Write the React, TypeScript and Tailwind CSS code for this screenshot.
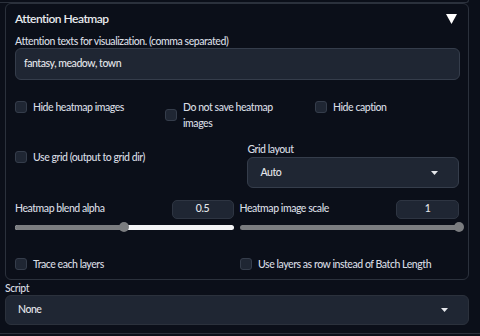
import React from "react";

const Check = ({ label, className = "" }: { label: React.ReactNode; className?: string }) => (
  <div className={"flex items-center gap-[6px] " + className}>
    <div className="w-[12px] h-[12px] shrink-0 rounded-[3px] bg-[#1f2633] border border-[#353d4b]" />
    <div className="leading-[16px] text-[#d8dce2]">{label}</div>
  </div>
);

const Caret = () => (
  <svg width="7" height="4" viewBox="0 0 7 4" className="shrink-0">
    <path d="M0 0 L7 0 L3.5 4 Z" fill="#e5e7eb" />
  </svg>
);

const Slider = ({ pct }: { pct: number }) => (
  <div className="relative h-[12px] flex items-center">
    <div className="w-full h-[5px] rounded-full bg-[#f3f4f6] overflow-hidden flex">
      <div className="h-full bg-[#7b7d80]" style={{ width: pct + "%" }} />
    </div>
    <div
      className="absolute top-[1px] w-[10px] h-[10px] rounded-full bg-[#7b7d80]"
      style={{ left: `calc(${pct}% - 5px)` }}
    />
  </div>
);

export default function App() {
  return (
    <div
      className="w-[480px] h-[336px] bg-[#0b0f19] overflow-hidden text-[#d8dce2] text-[10.5px] font-medium tracking-[-0.45px]"
      style={{ fontFamily: "Lato, 'Noto Sans', sans-serif" }}
    >
      <div className="h-[3px] mr-[11px] border-b border-r border-[#2b313c] rounded-br-[4px]" />
      <div className="ml-[5px] w-[464px] h-[277px] border border-[#2b313c] rounded-[6px] px-[9px] pt-[7px]">
        <div className="h-[16px] flex items-center justify-between">
          <div className="text-[12px] font-semibold text-[#e8eaee] tracking-[-0.5px]">Attention Heatmap</div>
          <svg width="11" height="10" viewBox="0 0 11 10" className="mr-[2px]">
            <path d="M0 0 L11 0 L5.5 10 Z" fill="#ffffff" />
          </svg>
        </div>
        <div className="mt-[7px] h-[14px] leading-[14px]">
          Attention texts for visualization. (comma separated)
        </div>
        <div className="h-[32px] w-[445px] rounded-[6px] bg-[#1f2633] border border-[#353d4b] flex items-center px-[8px] text-[#e5e7eb]">
          fantasy, meadow, town
        </div>

        <div className="mt-[19px] grid grid-cols-[150px_150px_1fr]">
          <Check label="Hide heatmap images" className="items-start [&>div:first-child]:mt-[2px]" />
          <Check
            label={
              <>
                Do not save heatmap
                <br />
                images
              </>
            }
          />
          <Check label="Hide caption" className="items-start [&>div:first-child]:mt-[2px]" />
        </div>

        <div className="mt-[11px] flex">
          <div className="w-[233px] pt-[7px]">
            <Check label="Use grid (output to grid dir)" />
          </div>
          <div className="w-[212px]">
            <div className="h-[14px] leading-[14px] mb-[1px]">Grid layout</div>
            <div className="h-[31px] rounded-[6px] bg-[#1f2633] border border-[#353d4b] flex items-center justify-between pl-[12px] pr-[20px] text-[#e5e7eb]">
              <span>Auto</span>
              <Caret />
            </div>
          </div>
        </div>

        <div className="mt-[11px] flex gap-[6px]">
          <div className="w-[219px]">
            <div className="h-[20px] flex items-center justify-between">
              <span>Heatmap blend alpha</span>
              <div className="w-[62px] h-[19px] rounded-[5px] bg-[#1f2633] border border-[#2e3542] flex items-center justify-center text-[#e5e7eb]">
                0.5
              </div>
            </div>
            <div className="mt-[2px]">
              <Slider pct={50} />
            </div>
          </div>
          <div className="w-[220px]">
            <div className="h-[20px] flex items-center justify-between">
              <span>Heatmap image scale</span>
              <div className="w-[63px] h-[19px] rounded-[5px] bg-[#1f2633] border border-[#2e3542] flex items-center justify-center text-[#e5e7eb]">
                1
              </div>
            </div>
            <div className="mt-[2px]">
              <Slider pct={100} />
            </div>
          </div>
        </div>

        <div className="mt-[23px] flex">
          <div className="w-[225px]">
            <Check label="Trace each layers" />
          </div>
          <Check label="Use layers as row instead of Batch Length" />
        </div>
      </div>

      <div className="ml-[5px] mt-[1px] h-[14px] leading-[14px]">Script</div>
      <div className="ml-[5px] w-[464px] h-[30px] rounded-[6px] bg-[#1f2633] border border-[#2b313c] flex items-center justify-between pl-[12px] pr-[20px] text-[#e5e7eb]">
        <span>None</span>
        <Caret />
      </div>
      <div className="mt-[8px] border-t border-[#2b313c]" />
    </div>
  );
}
